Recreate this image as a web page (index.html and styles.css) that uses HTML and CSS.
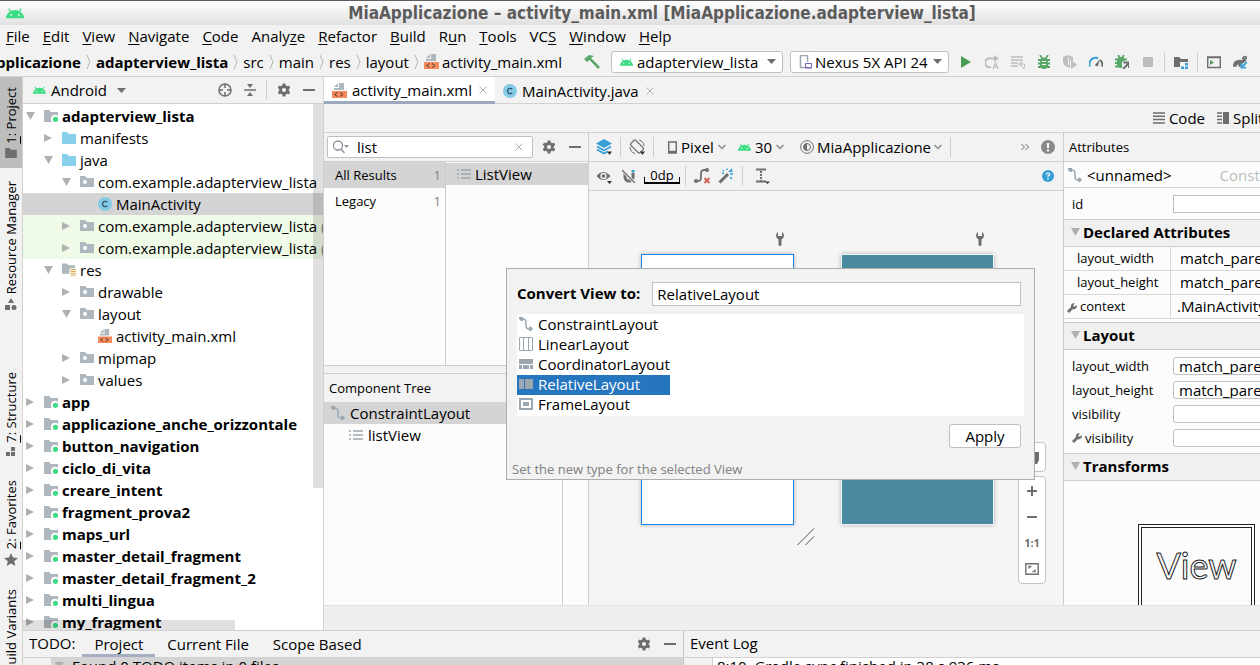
FILE: index.html
```
<!DOCTYPE html>
<html lang="it">
<head>
  <meta charset="utf-8">
  <title>MiaApplicazione – activity_main.xml</title>
  <link rel="stylesheet" href="styles.css">
</head>
<body>
  <!-- Icon definitions -->
  <svg class="defs" width="0" height="0">
    <symbol id="android" viewBox="0 0 14 8"><path fill="#3ddc84" d="M0 8a7 6 0 0 1 3-5L1.800.8l.7-.5L3.900 2.400a7 7 0 0 1 6.200 0L11.500.3l.7.5L11 3a7 6 0 0 1 3 5z"/><circle cx="4" cy="5.500" r=".7" fill="#fff"/><circle cx="10" cy="5.500" r=".7" fill="#fff"/></symbol>
    <symbol id="folder" viewBox="0 0 14 12"><path d="M0 0h5l2 2h7v10H0z" fill="currentColor"/></symbol>
    <symbol id="module" viewBox="0 0 14 12"><path d="M0 0h5l2 2h7v4a4 4 0 0 0-6 6H0z" fill="#adb7bd"/><circle cx="11.500" cy="9.300" r="2.600" fill="#3ddc84"/></symbol>
    <symbol id="package" viewBox="0 0 14 12"><path d="M0 0h5l2 2h7v9H0z" fill="#adb7bd"/><circle cx="5" cy="6" r="2" fill="#fff"/></symbol>
    <symbol id="resfolder" viewBox="0 0 15 14"><path d="M0 0h5l2 2h7v3H8v6H0z" fill="#adb7bd"/><path d="M9 6.500h6M9 8.500h6M9 10.500h6M9 12.500h6" stroke="#d9a343"/></symbol>
    <symbol id="xml" viewBox="0 0 15 15"><path d="M7 0h5v7H2V5h5z" fill="#adb7bd"/><path d="M6 0v4H2z" fill="#adb7bd"/><path d="M0 8h15v7H0z" fill="#f58a5c"/><path d="M5.500 9.500l-3 2 3 2M8 9.500l3 2-3 2" fill="none" stroke="#5b3a2a"/></symbol>
    <symbol id="cls" viewBox="0 0 14 14"><circle cx="7" cy="7" r="7" fill="#84c9e6"/><path d="M9.300 5.200A2.700 2.700 0 1 0 9.300 8.800" fill="none" stroke="#34586b" stroke-width="1.300"/></symbol>
    <symbol id="gear" viewBox="0 0 14 14"><circle cx="7" cy="7" r="3.500" fill="none" stroke="#6e6e6e" stroke-width="2.800"/><path stroke="#6e6e6e" stroke-width="3" d="M7 .5V3M7 11v2.500M1.400 3.800l2 1.100M10.600 9.100l2 1.100M1.400 10.200l2-1.100M10.600 4.900l2-1.100"/></symbol>
    <symbol id="minus" viewBox="0 0 12 12"><path d="M0 6h12" stroke="#6e6e6e" stroke-width="2"/></symbol>
    <symbol id="target" viewBox="0 0 14 14"><circle cx="7" cy="7" r="6" fill="none" stroke="#6e6e6e" stroke-width="1.500"/><path d="M7 1v4M7 9v4M1 7h4M9 7h4" stroke="#6e6e6e" stroke-width="1.500"/></symbol>
    <symbol id="collapse" viewBox="0 0 12 12"><path d="M0 6h12" stroke="#6e6e6e" stroke-width="1.500"/><path d="M3 0h6L6 4zM3 12h6L6 8z" fill="#6e6e6e"/></symbol>
    <symbol id="close" viewBox="0 0 8 8"><path d="M.5.5l7 7M7.500.5l-7 7" stroke="#b0b0b0"/></symbol>
    <symbol id="crumb" viewBox="0 0 5 14"><path d="M1 0l3 7-3 7" fill="none" stroke="#b4b4b4"/></symbol>
    <symbol id="chev" viewBox="0 0 8 6"><path d="M.5 1l3.500 3.500L7.500 1" fill="none" stroke="#8a8a8a" stroke-width="1.500"/></symbol>
    <symbol id="drop" viewBox="0 0 9 5"><path d="M0 0h9L4.500 5z" fill="#6e6e6e"/></symbol>
    <symbol id="down" viewBox="0 0 9 8"><path d="M0 0h9L4.500 8z" fill="currentColor"/></symbol>
    <symbol id="right" viewBox="0 0 9 8"><path d="M0 0l8 4-8 4z" fill="currentColor"/></symbol>
    <symbol id="constraint" viewBox="0 0 14 14"><path d="M2 2h2c3 0 3 2 3 5s0 5 3 5h2" fill="none" stroke="#9aa7b0" stroke-width="1.500"/><path d="M0 0h4v4H2L0 2zM10 10l2-.5 2 2.500-2 2h-2z" fill="#9aa7b0"/></symbol>
    <symbol id="list" viewBox="0 0 14 12"><path d="M0 2h2M4 2h10M0 6h2M4 6h10M0 10h2M4 10h10" stroke="#9aa7b0" stroke-width="1.500"/></symbol>
    <symbol id="wrench" viewBox="0 0 8 14"><path d="M2 0v4h4V0q2 1 2 3.500T5.500 7.500V13q0 1-1.500 1t-1.500-1V7.500Q0 6 0 3.500T2 0z" fill="#6e6e6e"/></symbol>
    <symbol id="tool" viewBox="0 0 10 10"><path d="M0 8l4-4Q3.500 1 6 .3q1-.3 2 0L6.500 2v1.500H8L9.700 2q.6 2-.7 3.300T6 6L2 10z" fill="#6e6e6e"/></symbol>
  </svg>

  <header class="titlebar">
    <svg class="logo"><use href="#android"/></svg>
    <h1>MiaApplicazione – activity_main.xml [MiaApplicazione.adapterview_lista]</h1>
  </header>

  <nav class="menubar">
    <button><u>F</u>ile</button>
    <button><u>E</u>dit</button>
    <button><u>V</u>iew</button>
    <button><u>N</u>avigate</button>
    <button><u>C</u>ode</button>
    <button>Analy<u>z</u>e</button>
    <button><u>R</u>efactor</button>
    <button><u>B</u>uild</button>
    <button>R<u>u</u>n</button>
    <button><u>T</u>ools</button>
    <button>VC<u>S</u></button>
    <button><u>W</u>indow</button>
    <button><u>H</u>elp</button>
  </nav>

  <div class="navbar">
    <div class="crumbs">
      <b>MiaApplicazione</b><svg class="crumb"><use href="#crumb"/></svg>
      <b>adapterview_lista</b><svg class="crumb"><use href="#crumb"/></svg>
      <span>src</span><svg class="crumb"><use href="#crumb"/></svg>
      <span>main</span><svg class="crumb"><use href="#crumb"/></svg>
      <span>res</span><svg class="crumb"><use href="#crumb"/></svg>
      <span>layout</span><svg class="crumb"><use href="#crumb"/></svg>
      <svg class="i15"><use href="#xml"/></svg><span class="file">activity_main.xml</span>
    </div>
    <button class="hammer" aria-label="Build"><svg width="16" height="16" viewBox="0 0 16 16"><path d="M0 5l5-4 5 1-3 2 9 9-2 2-8.500-9L3 8z" fill="#59a869"/></svg></button>
    <div class="combo run-config">
      <svg class="android"><use href="#android"/></svg>
      <select aria-label="Run configuration"><option>adapterview_lista</option></select>
      <svg class="arrow"><use href="#drop"/></svg>
    </div>
    <div class="combo device">
      <svg width="14" height="14" viewBox="0 0 14 14"><path d="M8 12.500H1.500v-12h7V7" fill="none" stroke="#9aa7b0" stroke-width="1.500"/><path d="M6.500 8.500h6v4h-6zM6 14h7" fill="none" stroke="#7b5fb0"/></svg>
      <select aria-label="Device"><option>Nexus 5X API 24</option></select>
      <svg class="arrow"><use href="#drop"/></svg>
    </div>
    <div class="run-tools">
      <button aria-label="Run"><svg viewBox="0 0 14 14"><path d="M2 1l10 6-10 6z" fill="#499c54"/></svg></button>
      <button aria-label="Apply changes"><svg viewBox="0 0 14 14"><path d="M6 12A4.500 4.500 0 1 1 6 3.500h5" fill="none" stroke="#bdbdbd" stroke-width="2"/><path d="M9 0l5 3.500L9 7z" fill="#bdbdbd"/><path d="M8 14l2.500-6 2.500 6M9 12h3" fill="none" stroke="#bdbdbd" stroke-width="1.200"/></svg></button>
      <button aria-label="Apply code changes"><svg viewBox="0 0 14 14"><path d="M0 2h12M0 5h12M0 8h7M0 11h7" stroke="#bdbdbd" stroke-width="1.500"/><path d="M9 9h3a2 2 0 0 1 0 4h-1M11 6.500L8.500 9l2.500 2.500" fill="none" stroke="#bdbdbd" stroke-width="1.200"/></svg></button>
      <button aria-label="Debug"><svg viewBox="0 0 14 14"><path d="M3 0l2 3M11 0L9 3M1 5h12M1 8.500h12M1 12h12" stroke="#59a869" stroke-width="1.800"/><rect x="3" y="2.500" width="8" height="11.500" rx="4" fill="#59a869"/><path d="M5 6.500h4M5 9.500h4" stroke="#fff"/></svg></button>
      <button aria-label="Coverage"><svg viewBox="0 0 14 14"><path d="M0 2l5-2 5 2v4L7 5v8Q0 11 0 6z" fill="#bdbdbd"/><path d="M5.500 2v8" stroke="#f2f2f2"/><path d="M8 5l6 4.500-6 4.500z" fill="#bdbdbd"/></svg></button>
      <button aria-label="Profile"><svg viewBox="0 0 14 14"><path d="M1 11.500A6 6 0 0 1 9 3.500" fill="none" stroke="#389fd6" stroke-width="2"/><path d="M11 5a6 6 0 0 1 2 6.500" fill="none" stroke="#6e6e6e" stroke-width="2"/><path d="M6 10l5-6-2 7q-2 1-3-1z" fill="#6e6e6e"/></svg></button>
      <button aria-label="Attach debugger"><svg viewBox="0 0 14 14"><path d="M3 0l2 3M9 0L7 3M0 4.500h12M0 8h7M0 11.500h7" stroke="#59a869" stroke-width="1.800"/><path d="M2 6q0-4 4-4t4 3L7 7v6Q2 13 2 9z" fill="#59a869"/><path d="M8 14l5-5M8.500 7.500H14V13" fill="none" stroke="#6e6e6e" stroke-width="2"/></svg></button>
      <button aria-label="Stop"><svg viewBox="0 0 14 14"><path d="M2 2h10v10H2z" fill="#bdbdbd"/></svg></button>
      <i class="sep"></i>
      <button aria-label="Project structure"><svg viewBox="0 0 14 14"><path d="M0 2h5l2 2h7v3H6v5H0z" fill="#6e6e6e"/><path d="M11 8h3v2.500h-3zM7 11.500h3V14H7zM11 11.500h3V14h-3z" fill="#389fd6"/></svg></button>
      <i class="sep"></i>
      <button aria-label="Running devices"><svg viewBox="0 0 14 14"><path d="M.7 2h12.600v10.500H.7zM0 2.500h14" fill="none" stroke="#6e6e6e" stroke-width="1.500"/><path d="M3 5l4 2.500L3 10z" fill="#499c54"/></svg></button>
      <button aria-label="Sync project"><svg viewBox="0 0 15 14"><path d="M0 12Q0 6 4 5q4-1 6 0 1-3 3-3l1 2-2 1q2-1 2 1l-4 3-2 3H6v-2H4v2z" fill="#6e6e6e"/><path d="M10 4q1-3 3-3t1 3" fill="none" stroke="#6e6e6e" stroke-width="1.500"/><path d="M15 7l-5 5M9 8v5h5" fill="none" stroke="#389fd6" stroke-width="2"/></svg></button>
    </div>
  </div>

  <div class="workspace">
    <!-- Tool window stripe -->
    <aside class="stripe">
      <button class="active"><span><u>1</u>: Project</span><svg width="12" height="10" color="#6e6e6e"><use href="#folder"/></svg></button>
      <button><span>Resource Manager</span><svg width="12" height="12" viewBox="0 0 12 12"><path d="M6 0l3 5H3zM0 7h5v5H0z" fill="#6e6e6e"/><circle cx="9" cy="9.500" r="2.500" fill="#6e6e6e"/></svg></button>
      <button class="push"><span><u>7</u>: Structure</span><svg width="10" height="10" viewBox="0 0 10 10"><path d="M5 0h4v4H5zM0 5h4v4H0zM5 5h4v4H5z" fill="#6e6e6e"/></svg></button>
      <button><span><u>2</u>: Favorites</span><svg width="14" height="13" viewBox="0 0 14 13"><path d="M7 0l2 4.500 5 .5-3.800 3.200L11.400 13 7 10.500 2.600 13l1.200-4.800L0 5l5-.5z" fill="#6e6e6e"/></svg></button>
      <button><span>Build Variants</span></button>
    </aside>

    <div class="center">
      <div class="upper">
        <!-- Project tree -->
        <section class="project">
          <div class="project-head">
            <svg class="android"><use href="#android"/></svg>
            <button class="view">Android <svg class="arrow"><use href="#drop"/></svg></button>
            <button aria-label="Locate"><svg class="i14"><use href="#target"/></svg></button>
            <button aria-label="Collapse all"><svg class="i12"><use href="#collapse"/></svg></button>
            <i class="sep"></i>
            <button aria-label="Settings"><svg class="i14"><use href="#gear"/></svg></button>
            <button aria-label="Hide"><svg class="i12"><use href="#minus"/></svg></button>
          </div>
          <ul class="tree">
            <li class="l0"><svg class="tw"><use href="#down"/></svg><svg class="ic"><use href="#module"/></svg><b>adapterview_lista</b></li>
            <li class="l1"><svg class="tw"><use href="#right"/></svg><svg class="ic blue"><use href="#folder"/></svg>manifests</li>
            <li class="l1"><svg class="tw"><use href="#down"/></svg><svg class="ic blue"><use href="#folder"/></svg>java</li>
            <li class="l2"><svg class="tw"><use href="#down"/></svg><svg class="ic"><use href="#package"/></svg>com.example.adapterview_lista</li>
            <li class="l3 selected"><svg class="ic tall"><use href="#cls"/></svg>MainActivity</li>
            <li class="l2 test"><svg class="tw"><use href="#right"/></svg><svg class="ic"><use href="#package"/></svg>com.example.adapterview_lista <span class="dim">(androidTest)</span></li>
            <li class="l2 test"><svg class="tw"><use href="#right"/></svg><svg class="ic"><use href="#package"/></svg>com.example.adapterview_lista <span class="dim">(test)</span></li>
            <li class="l1"><svg class="tw"><use href="#down"/></svg><svg class="ic tall"><use href="#resfolder"/></svg>res</li>
            <li class="l2"><svg class="tw"><use href="#right"/></svg><svg class="ic"><use href="#package"/></svg>drawable</li>
            <li class="l2"><svg class="tw"><use href="#down"/></svg><svg class="ic"><use href="#package"/></svg>layout</li>
            <li class="l3"><svg class="ic tall"><use href="#xml"/></svg>activity_main.xml</li>
            <li class="l2"><svg class="tw"><use href="#right"/></svg><svg class="ic"><use href="#package"/></svg>mipmap</li>
            <li class="l2"><svg class="tw"><use href="#right"/></svg><svg class="ic"><use href="#package"/></svg>values</li>
            <li class="l0"><svg class="tw"><use href="#right"/></svg><svg class="ic"><use href="#module"/></svg><b>app</b></li>
            <li class="l0"><svg class="tw"><use href="#right"/></svg><svg class="ic"><use href="#module"/></svg><b>applicazione_anche_orizzontale</b></li>
            <li class="l0"><svg class="tw"><use href="#right"/></svg><svg class="ic"><use href="#module"/></svg><b>button_navigation</b></li>
            <li class="l0"><svg class="tw"><use href="#right"/></svg><svg class="ic"><use href="#module"/></svg><b>ciclo_di_vita</b></li>
            <li class="l0"><svg class="tw"><use href="#right"/></svg><svg class="ic"><use href="#module"/></svg><b>creare_intent</b></li>
            <li class="l0"><svg class="tw"><use href="#right"/></svg><svg class="ic"><use href="#module"/></svg><b>fragment_prova2</b></li>
            <li class="l0"><svg class="tw"><use href="#right"/></svg><svg class="ic"><use href="#module"/></svg><b>maps_url</b></li>
            <li class="l0"><svg class="tw"><use href="#right"/></svg><svg class="ic"><use href="#module"/></svg><b>master_detail_fragment</b></li>
            <li class="l0"><svg class="tw"><use href="#right"/></svg><svg class="ic"><use href="#module"/></svg><b>master_detail_fragment_2</b></li>
            <li class="l0"><svg class="tw"><use href="#right"/></svg><svg class="ic"><use href="#module"/></svg><b>multi_lingua</b></li>
            <li class="l0"><svg class="tw"><use href="#right"/></svg><svg class="ic"><use href="#module"/></svg><b>my_fragment</b></li>
          </ul>
          <i class="scroll-v"></i>
          <i class="scroll-h"></i>
        </section>

        <!-- Editor -->
        <main class="editor">
          <div class="tabs">
            <button class="tab active"><svg class="i15"><use href="#xml"/></svg><span>activity_main.xml</span><svg class="x"><use href="#close"/></svg></button>
            <button class="tab"><svg class="i14"><use href="#cls"/></svg><span>MainActivity.java</span><svg class="x"><use href="#close"/></svg></button>
          </div>
          <div class="modes">
            <button><svg width="12" height="12" viewBox="0 0 12 12"><path d="M0 1h12M0 4.300h12M0 7.600h12M0 11h12" stroke="#6e6e6e" stroke-width="1.500"/></svg>Code</button>
            <button><svg width="12" height="12" viewBox="0 0 12 12"><path d="M0 1h5M0 4.300h5M0 7.600h5M0 11h5" stroke="#6e6e6e" stroke-width="1.500"/><path d="M6 0h6v12H6z" fill="#6e6e6e"/></svg>Split</button>
          </div>
          <div class="designer">
            <section class="palette">
              <div class="palette-head">
                <div class="search">
                  <svg width="16" height="14" viewBox="0 0 16 14"><circle cx="5" cy="5.500" r="4.500" fill="none" stroke="#8c9399" stroke-width="1.300"/><path d="M8 9l3.500 4" stroke="#8c9399" stroke-width="1.300"/><path d="M11 5h5l-2.500 3z" fill="#8c9399"/></svg>
                  <input type="text" value="list" aria-label="Search palette">
                  <svg class="x"><use href="#close"/></svg>
                </div>
                <button aria-label="Palette settings"><svg class="i14"><use href="#gear"/></svg></button>
                <button aria-label="Hide palette"><svg class="i12"><use href="#minus"/></svg></button>
              </div>
              <div class="palette-body">
                <ul class="groups">
                  <li class="selected">All Results<span>1</span></li>
                  <li>Legacy<span>1</span></li>
                </ul>
                <ul class="items">
                  <li><svg class="i14"><use href="#list"/></svg>ListView</li>
                </ul>
              </div>
              <div class="splitter"></div>
              <h2>Component Tree</h2>
              <ul class="components">
                <li class="selected"><svg class="i14"><use href="#constraint"/></svg>ConstraintLayout</li>
                <li class="child"><svg class="i14"><use href="#list"/></svg>listView</li>
              </ul>
            </section>

            <section class="surface">
              <div class="bar">
                <button aria-label="Layers"><svg class="i16" viewBox="0 0 16 16"><path d="M8 0l8 4.500L8 9 0 4.500z" fill="#389fd6"/><path d="M1 7.500l7 4 7-4M1 10.500l7 4 4-2" fill="none" stroke="#389fd6" stroke-width="1.800"/><path d="M11 12.500h5L13.500 16z" fill="#333"/></svg></button>
                <i class="sep"></i>
                <button aria-label="Orientation"><svg class="i16" viewBox="0 0 16 16"><rect x="4.500" y="1" width="7" height="13" rx="1.500" fill="none" stroke="#6e6e6e" stroke-width="1.200" transform="rotate(-45 8 7.500)"/><path d="M10 .8A7 7 0 0 1 15 7M6 14.500A7 7 0 0 1 1 8" fill="none" stroke="#6e6e6e"/><path d="M11 12.500h5L13.500 16z" fill="#333"/></svg></button>
                <i class="sep"></i>
                <button class="pick pixel"><svg width="9" height="13" viewBox="0 0 9 13"><path d="M.7 1h7.600v11H.7zM0 10.500h9" fill="none" stroke="#6e6e6e" stroke-width="1.500"/></svg>Pixel<svg class="chev"><use href="#chev"/></svg></button>
                <button class="pick"><svg class="android"><use href="#android"/></svg>30<svg class="chev"><use href="#chev"/></svg></button>
                <button class="pick theme"><svg class="i14" viewBox="0 0 14 14"><circle cx="7" cy="7" r="6.400" fill="none" stroke="#6e6e6e"/><circle cx="7" cy="7" r="3.500" fill="none" stroke="#6e6e6e"/><path d="M7 3.500v7a3.500 3.500 0 0 1 0-7" fill="#6e6e6e"/></svg>MiaApplicazione<svg class="chev"><use href="#chev"/></svg></button>
                <i class="sep"></i>
                <button class="more" aria-label="More"><svg width="8" height="6" viewBox="0 0 8 6"><path d="M.5 0l3 3-3 3M4.500 0l3 3-3 3" fill="none" stroke="#6e6e6e"/></svg></button>
                <button aria-label="Issues"><svg class="i14" viewBox="0 0 14 14"><circle cx="7" cy="7" r="7" fill="#8a8a8a"/><path d="M7 3v5M7 9.500v2" stroke="#fff" stroke-width="2"/></svg></button>
              </div>
              <div class="bar">
                <button aria-label="View options"><svg class="i16" viewBox="0 0 16 16"><path d="M.5 8Q7 0 14.500 8 7 16 .5 8z" fill="#6e6e6e"/><circle cx="7.500" cy="8" r="3.200" fill="#f2f2f2"/><circle cx="7.500" cy="8" r="1.800" fill="#6e6e6e"/><path d="M11 13h5l-2.500 3z" fill="#333"/></svg></button>
                <button class="magnet" aria-label="Autoconnect"><svg class="i14" viewBox="0 0 14 14"><path d="M3 4v4a4 4 0 0 0 8 0V4" fill="none" stroke="#6e6e6e" stroke-width="3"/><path d="M9.500 1h3v2.500h-3z" fill="#389fd6"/><path d="M0 1l13 13" stroke="#f2f2f2" stroke-width="3"/><path d="M0 1l13 13" stroke="#6e6e6e" stroke-width="1.300"/></svg></button>
                <button class="margin">0dp</button>
                <i class="sep"></i>
                <button aria-label="Clear constraints"><svg class="i16" viewBox="0 0 16 16"><path d="M1 13h3c3 0 3-2 3-5.500S7 2 10 2h3" fill="none" stroke="#6e6e6e" stroke-width="1.800"/><circle cx="2" cy="13" r="2" fill="#6e6e6e"/><circle cx="13" cy="2" r="2" fill="#6e6e6e"/><path d="M10.500 10l5 5M15.500 10l-5 5" stroke="#d0604f" stroke-width="1.800"/></svg></button>
                <button aria-label="Infer constraints"><svg class="i16" viewBox="0 0 16 16"><path d="M1.500 14.500L10 6" stroke="#6e6e6e" stroke-width="3"/><path d="M9 2V.5M6 3L5 2M11 4l3-3M12 6h3M12 9l2 2M6 5l-2 .5M12.500 3.500l2-.5" stroke="#389fd6" stroke-width="1.500"/></svg></button>
                <i class="sep"></i>
                <button class="guides" aria-label="Guidelines"><svg class="i16" viewBox="0 0 16 16"><path d="M2 1.500h10M2 13.500h10" stroke="#6e6e6e" stroke-width="1.800"/><path d="M7 3v10" stroke="#6e6e6e" stroke-width="2" stroke-dasharray="2 1"/><path d="M11 13.500h5L13.500 16z" fill="#333"/></svg></button>
                <button class="more" aria-label="Help"><svg class="i12" viewBox="0 0 12 12"><circle cx="6" cy="6" r="6" fill="#389fd6"/><path d="M4.300 4.500Q4.300 3 6 3t1.700 1.500Q7.700 5.500 6 6v1M6 8v1.500" fill="none" stroke="#fff" stroke-width="1.200"/></svg></button>
              </div>
              <div class="canvas">
                <svg class="pin pin-design"><use href="#wrench"/></svg>
                <svg class="pin pin-blueprint"><use href="#wrench"/></svg>
                <div class="screen design"></div>
                <div class="screen blueprint"></div>
                <svg class="grip" viewBox="0 0 18 18"><path d="M.5 17L17 .5M8.500 17l8.500-8.500" stroke="#555"/></svg>
                <div class="zoom">
                  <div class="pan"><button aria-label="Pan"><svg class="i14" viewBox="0 0 14 14"><path d="M2 3h2V1h2V0h2v1h2v1h4v8l-2 4H5L1 8z" fill="#6e6e6e"/></svg></button></div>
                  <div class="levels">
                    <button aria-label="Zoom in"><svg width="10" height="10" viewBox="0 0 10 10"><path d="M0 5h10M5 0v10" stroke="#6e6e6e" stroke-width="2"/></svg></button>
                    <button aria-label="Zoom out"><svg width="10" height="10" viewBox="0 0 10 10"><path d="M0 5h10" stroke="#6e6e6e" stroke-width="2"/></svg></button>
                    <button class="one">1:1</button>
                    <button aria-label="Fit"><svg width="14" height="12" viewBox="0 0 14 12"><path d="M.8.8h12.400v10.400H.8zM4 5.500V3.500h2.500M10 6.500v2H7.500" fill="none" stroke="#6e6e6e" stroke-width="1.400"/></svg></button>
                  </div>
                </div>
              </div>
            </section>

            <!-- Attributes -->
            <section class="attributes">
              <h2>Attributes</h2>
              <div class="component"><svg class="i14"><use href="#constraint"/></svg>&lt;unnamed&gt;<span>ConstraintLayout</span></div>
              <div class="field id-row"><label for="id">id</label><input id="id" type="text"></div>
              <h3><svg class="tw"><use href="#down"/></svg>Declared Attributes</h3>
              <table>
                <tr><th>layout_width</th><td>match_parent</td></tr>
                <tr><th>layout_height</th><td>match_parent</td></tr>
                <tr><th class="tooled"><svg class="i10"><use href="#tool"/></svg>context</th><td class="tooled">.MainActivity</td></tr>
              </table>
              <h3><svg class="tw"><use href="#down"/></svg>Layout</h3>
              <div class="fields">
                <div class="field"><label for="lw">layout_width</label><input id="lw" type="text" value="match_parent"></div>
                <div class="field"><label for="lh">layout_height</label><input id="lh" type="text" value="match_parent"></div>
                <div class="field"><label for="vis">visibility</label><input id="vis" type="text"></div>
                <div class="field"><label for="tvis"><svg class="i10"><use href="#tool"/></svg>visibility</label><input id="tvis" type="text"></div>
              </div>
              <h3><svg class="tw"><use href="#down"/></svg>Transforms</h3>
              <div class="transform"><div class="view-box">View</div></div>
            </section>
          </div>
          <div class="editor-foot"></div>
        </main>
      </div>

      <!-- Bottom tool windows -->
      <div class="lower">
        <section class="todo">
          <div class="tool-head">
            <span>TODO:</span>
            <button class="active">Project</button>
            <button>Current File</button>
            <button>Scope Based</button>
            <button class="end" aria-label="TODO settings"><svg class="i14"><use href="#gear"/></svg></button>
            <button class="hide" aria-label="Hide TODO"><svg class="i12"><use href="#minus"/></svg></button>
          </div>
          <div class="todo-body"><div class="gutter"></div><p><svg class="tw"><use href="#down"/></svg>Found 0 TODO items in 0 files</p></div>
        </section>
        <section class="log">
          <div class="tool-head"><span>Event Log</span></div>
          <div class="log-body"><div class="gutter"></div><p>8:10&nbsp; Gradle sync finished in 38 s 936 ms</p></div>
        </section>
      </div>
    </div>
  </div>

  <!-- Convert view popup -->
  <form class="popup">
    <div class="popup-top">
      <label for="convert">Convert View to:</label>
      <input id="convert" type="text" value="RelativeLayout">
    </div>
    <ul>
      <li><svg class="i14"><use href="#constraint"/></svg>ConstraintLayout</li>
      <li><svg class="i14" viewBox="0 0 14 14"><path d="M.5.5h13v13H.5zM4.500 0v14M9.500 0v14" fill="none" stroke="#9aa7b0"/></svg>LinearLayout</li>
      <li><svg class="i14" viewBox="0 0 14 14"><path d="M0 2h14v5H0zM0 8h3v4H0zM4 8h6v4H4zM11 8h3v4h-3z" fill="#9aa7b0"/></svg>CoordinatorLayout</li>
      <li class="selected"><svg class="i14" viewBox="0 0 14 14"><path d="M0 2h5v10H0zM6 2h8v10H6z" fill="#9aa7b0"/></svg>RelativeLayout</li>
      <li><svg class="i14" viewBox="0 0 14 14"><path d="M1 2h12v10H1z" fill="none" stroke="#9aa7b0" stroke-width="2"/><path d="M4 5h6v4H4z" fill="#9aa7b0"/></svg>FrameLayout</li>
    </ul>
    <div class="popup-actions"><button type="button">Apply</button></div>
    <p>Set the new type for the selected View</p>
  </form>
</body>
</html>
```
FILE: styles.css
```
* {
  box-sizing: border-box;
}
body {
  margin: 0;
  height: 100vh;
  display: flex;
  flex-direction: column;
  overflow: hidden;
  background: #f2f2f2;
  color: #000;
  font: 15px/22px "Open Sans", sans-serif;
  white-space: nowrap;
}
button, input, select {
  font: inherit;
  color: inherit;
  background: none;
  border: none;
  padding: 0;
  margin: 0;
}
button {
  display: flex;
  align-items: center;
  justify-content: center;
}
ul {
  list-style: none;
  margin: 0;
  padding: 0;
}
h1, h2, h3, p {
  margin: 0;
}
svg {
  flex: none;
  display: block;
}
u {
  text-underline-offset: 2px;
}
.defs {
  position: absolute;
}

/* Icon sizes */
.i10 { width: 10px; height: 10px; }
.i12 { width: 12px; height: 12px; }
.i14 { width: 14px; height: 14px; }
.i15 { width: 15px; height: 15px; }
.i16 { width: 16px; height: 16px; }
.x, .chev { width: 8px; height: 8px; }
.android { width: 13px; height: 8px; }
.arrow { width: 9px; height: 5px; }
.tw { width: 9px; height: 8px; color: #b0b0b0; }
.sep {
  width: 1px;
  height: 20px;
  background: #cdcdcd;
}

/* Title, menu and navigation bars */
.titlebar {
  flex: none;
  height: 25px;
  display: flex;
  align-items: center;
  border-top: 1px solid #5c5c5c;
  background: linear-gradient(#fff, #e0e0e0);
}
.titlebar h1 {
  flex: 1;
  padding-left: 40px;
  text-align: center;
  color: #5c5c5c;
  font: bold 17px/22px "DejaVu Sans Condensed", "DejaVu Sans", sans-serif;
}
.logo {
  width: 18px;
  height: 12px;
  margin-left: 6px;
}
.menubar {
  flex: none;
  height: 22px;
  display: flex;
  gap: 13px;
  padding-left: 6px;
}
.navbar {
  flex: none;
  height: 30px;
  display: flex;
  align-items: center;
  border-bottom: 1px solid #d1d1d1;
}
.crumbs {
  flex: none;
  width: 562px;
  display: flex;
  align-items: center;
  justify-content: flex-end;
  overflow: hidden;
}
.crumb {
  width: 5px;
  height: 14px;
  margin: 0 5px;
}
.file {
  margin-left: 3px;
}
.hammer {
  margin: 0 11px 0 22px;
}
.combo {
  height: 22px;
  display: flex;
  align-items: center;
  gap: 4px;
  margin-right: 7px;
  padding: 0 6px 0 8px;
  border: 1px solid #c0c0c0;
  border-radius: 3px;
  background: #fff;
}
.combo select {
  appearance: none;
  flex: 1;
  min-width: 0;
  height: 20px;
  line-height: 20px;
}
.run-config { width: 172px; }
.device {
  width: 159px;
  gap: 2px;
}
.run-tools {
  display: flex;
  align-items: center;
  gap: 12px;
  margin-left: 3px;
}
.run-tools svg {
  width: 14px;
  height: 14px;
}
.run-tools .sep {
  margin: 0 -3px;
}

/* Workspace */
.workspace {
  flex: 1;
  min-height: 0;
  display: flex;
}
.stripe {
  flex: none;
  width: 23px;
  display: flex;
  flex-direction: column;
  gap: 3px;
  overflow: hidden;
  border-right: 1px solid #d1d1d1;
  font-size: 13px;
  line-height: 18px;
}
.stripe button {
  flex: none;
  flex-direction: column;
  gap: 4px;
  padding: 10px 0;
}
.stripe span {
  writing-mode: vertical-rl;
  transform: rotate(180deg);
}
.stripe .active {
  background: #bdbdbd;
}
.stripe .push {
  margin-top: 39px;
}
.center {
  flex: 1;
  min-width: 0;
  display: flex;
  flex-direction: column;
}
.upper {
  flex: 1;
  min-height: 0;
  display: flex;
}

/* Project tree */
.project {
  position: relative;
  flex: none;
  width: 301px;
  overflow: hidden;
  border-right: 1px solid #d1d1d1;
  background: #fff;
}
.project-head {
  height: 27px;
  display: flex;
  align-items: center;
  gap: 12px;
  padding: 0 8px 0 10px;
  border-bottom: 1px solid #d1d1d1;
  background: #f2f2f2;
}
.project-head .view {
  gap: 10px;
  margin: 0 auto 0 -7px;
}
.project-head .sep {
  margin: 0 -2px;
}
.tree {
  padding-top: 1px;
}
.tree li {
  height: 22px;
  display: flex;
  align-items: center;
  white-space: pre;
}
.tree .tw {
  margin-right: 9px;
}
.tree .ic {
  width: 14px;
  height: 12px;
  margin-right: 4px;
}
.tree .tall {
  height: 14px;
}
.tree .blue {
  color: #87d0ec;
}
.l0 { padding-left: 3px; }
.l1 { padding-left: 21px; }
.l2 { padding-left: 39px; }
.l3 { padding-left: 75px; }
.selected {
  background: #d4d4d4;
}
.test {
  background: #effae7;
}
.dim {
  color: #808080;
}
.scroll-v, .scroll-h {
  position: absolute;
  background: rgba(0, 0, 0, 0.12);
}
.scroll-v {
  top: 27px;
  right: 0;
  width: 10px;
  height: 384px;
}
.scroll-h {
  left: 0;
  bottom: 0;
  width: 212px;
  height: 10px;
}

/* Editor */
.editor {
  flex: 1;
  min-width: 0;
  display: flex;
  flex-direction: column;
}
.tabs {
  flex: none;
  height: 27px;
  display: flex;
  border-bottom: 1px solid #d1d1d1;
}
.tab {
  height: 27px;
  gap: 5px;
  padding: 0 8px;
}
.tab .x {
  margin-left: 2px;
}
.tab.active {
  background: #fff;
  border-bottom: 3px solid #9ca8bd;
  padding-top: 2px;
}
.modes {
  flex: none;
  height: 29px;
  display: flex;
  justify-content: flex-end;
  gap: 12px;
  overflow: hidden;
  border-bottom: 1px solid #d1d1d1;
}
.modes button {
  gap: 4px;
}
.modes button:last-child {
  width: 43px;
  justify-content: flex-start;
}
.designer {
  flex: 1;
  min-height: 0;
  display: flex;
}
.editor-foot {
  flex: none;
  height: 25px;
  border-top: 1px solid #e0e0e0;
  background: #efefef;
}
h2 {
  font-size: 13px;
  font-weight: normal;
}

/* Palette */
.palette {
  flex: none;
  width: 265px;
  display: flex;
  flex-direction: column;
  border-right: 1px solid #cdcdcd;
  background: #fcfcfc;
}
.palette-head {
  flex: none;
  height: 29px;
  display: flex;
  align-items: center;
  gap: 13px;
  padding: 0 7px 0 3px;
  border-bottom: 1px solid #d1d1d1;
  background: #f2f2f2;
}
.search {
  flex: 1;
  min-width: 0;
  height: 22px;
  display: flex;
  align-items: center;
  gap: 8px;
  margin-right: -4px;
  padding: 0 9px 0 5px;
  border: 1px solid #c0c0c0;
  border-radius: 2px;
  background: #fff;
}
.search input {
  flex: 1;
  min-width: 0;
}
.palette-body {
  flex: none;
  height: 203px;
  display: flex;
}
.groups {
  width: 122px;
  border-right: 1px solid #cdcdcd;
  font-size: 13px;
}
.groups li {
  height: 26px;
  display: flex;
  align-items: center;
  justify-content: space-between;
  padding: 0 4px 0 11px;
}
.groups span {
  color: #808080;
}
.items {
  flex: 1;
  padding-top: 1px;
}
.items li {
  height: 22px;
  display: flex;
  align-items: center;
  gap: 4px;
  padding-left: 11px;
  background: #d4d4d4;
}
.splitter {
  flex: none;
  height: 9px;
  border: 1px solid #cdcdcd;
  border-width: 1px 0;
  background: #f2f2f2;
}
.palette h2 {
  flex: none;
  height: 28px;
  padding: 3px 5px;
  background: #f2f2f2;
}
.components {
  flex: 1;
  width: 239px;
  border-right: 1px solid #cdcdcd;
}
.components li {
  height: 22px;
  display: flex;
  align-items: center;
  gap: 5px;
  padding-left: 7px;
}
.components .child {
  padding-left: 25px;
}

/* Design surface */
.surface {
  flex: 1;
  min-width: 0;
  display: flex;
  flex-direction: column;
  background: #f5f5f5;
}
.bar {
  flex: none;
  height: 29px;
  display: flex;
  align-items: center;
  gap: 8px;
  padding: 0 8px 0 7px;
  border-bottom: 1px solid #d1d1d1;
  background: #f2f2f2;
}
.pick {
  gap: 4px;
}
.pixel {
  margin-left: 6px;
}
.theme {
  gap: 3px;
  margin-left: 8px;
}
.pick + .pick:not(.theme) {
  margin-left: 4px;
}
.bar .more {
  margin-left: auto;
  margin-right: 4px;
}
.bar .i12 {
  margin-right: -3px;
}
.magnet {
  margin-left: 2px;
}
.margin {
  width: 36px;
  height: 16px;
  margin-right: -3px;
  border-width: 0 1px 2px;
  border-style: solid;
  border-image: linear-gradient(transparent 60%, #000 60%) 2;
  font-size: 13px;
  line-height: 14px;
}
.guides {
  margin-left: 3px;
}
.canvas {
  position: relative;
  flex: 1;
  overflow: hidden;
}
.pin, .screen, .grip, .zoom {
  position: absolute;
}
.pin {
  top: 41px;
  width: 8px;
  height: 14px;
}
.pin-design { left: 187px; }
.pin-blueprint { left: 387px; }
.screen {
  top: 63px;
  width: 153px;
  height: 271px;
  box-shadow: 0 0 4px rgba(0, 0, 0, 0.3);
}
.design {
  left: 52px;
  border: 1px solid #1a86f2;
  background: #fff;
}
.blueprint {
  left: 252px;
  border: 1px solid #eaf6f8;
  background: #498a9e;
}
.grip {
  left: 208px;
  top: 337px;
  width: 18px;
  height: 18px;
}
.zoom {
  right: 17px;
  bottom: 21px;
  width: 28px;
}
.pan, .levels {
  padding: 1px 0;
  border: 1px solid #c4c4c4;
  border-radius: 4px;
  background: #fff;
}
.pan {
  margin-bottom: 4px;
}
.zoom button {
  width: 26px;
  height: 26px;
}
.one {
  color: #6e6e6e;
  font-size: 11px;
  font-weight: bold;
}

/* Attributes */
.attributes {
  flex: none;
  width: 197px;
  overflow: hidden;
  border-left: 1px solid #cdcdcd;
  background: #fcfcfc;
}
.attributes h2 {
  height: 29px;
  padding: 3px 5px;
  border-bottom: 1px solid #d1d1d1;
  background: #f2f2f2;
}
.component {
  height: 26px;
  display: flex;
  align-items: center;
  gap: 5px;
  padding-left: 4px;
  border-bottom: 1px solid #d9d9d9;
}
.component span {
  margin-left: 43px;
  color: #b8bfb8;
}
.field {
  width: 240px;
  height: 24px;
  display: flex;
  align-items: center;
  font-size: 13px;
}
.field label {
  flex: none;
  width: 109px;
  display: flex;
  align-items: center;
  gap: 3px;
  padding-left: 8px;
}
.field input {
  flex: 1;
  height: 18px;
  padding: 0 5px;
  border: 1px solid #c0c0c0;
  border-radius: 3px;
  background: #fff;
  font-size: 15px;
}
.id-row {
  height: 31px;
}
.id-row input {
  border-radius: 0;
}
.attributes h3 {
  height: 28px;
  display: flex;
  align-items: center;
  gap: 3px;
  padding: 0 0 2px 7px;
  border: 1px solid #cdcdcd;
  border-width: 1px 0;
  background: #f0f0f0;
  font-size: 15px;
}
.attributes table {
  width: 240px;
  margin-bottom: 3px;
  border-spacing: 0;
  table-layout: fixed;
}
.attributes th, .attributes td {
  height: 24px;
  padding: 0 9px;
  border-bottom: 1px solid #d9d9d9;
  line-height: 23px;
}
.attributes th {
  width: 107px;
  padding-left: 13px;
  border-right: 1px solid #d9d9d9;
  font-size: 13px;
  font-weight: normal;
  text-align: left;
}
.attributes th.tooled {
  padding-left: 3px;
}
.attributes td.tooled {
  padding-left: 6px;
}
.tooled svg {
  display: inline-block;
  margin-right: 3px;
  vertical-align: middle;
}
.fields {
  padding: 4px 0 3px;
}
.transform {
  padding: 43px 0 0 74px;
}
.view-box {
  width: 117px;
  height: 117px;
  border: 4px double #222;
  color: transparent;
  font-family: Lato, sans-serif;
  font-size: 36px;
  line-height: 74px;
  text-align: center;
  -webkit-text-stroke: 1px #222;
}

/* Bottom tool windows */
.lower {
  flex: none;
  height: 35px;
  display: flex;
  overflow: hidden;
  border-top: 1px solid #d1d1d1;
}
.todo {
  flex: none;
  width: 661px;
  border-right: 1px solid #c8c8c8;
}
.log {
  flex: 1;
}
.tool-head {
  height: 27px;
  display: flex;
  padding: 0 7px 0 6px;
  border-bottom: 1px solid #d1d1d1;
  line-height: 25px;
}
.tool-head button {
  padding: 0 12px;
}
.tool-head span {
  margin-right: 7px;
}
.tool-head .active {
  border-bottom: 3px solid #a6b0c2;
  padding-top: 3px;
}
.tool-head .end {
  margin-left: auto;
  padding: 0;
}
.tool-head .hide {
  margin-left: 13px;
  padding: 0;
}
.todo-body, .log-body {
  display: flex;
  line-height: 16px;
}
.gutter {
  width: 28px;
}
.todo-body p {
  flex: 1;
  display: flex;
  align-items: center;
  gap: 8px;
  padding-left: 4px;
  background: #d4d4d4;
}
.log-body p {
  flex: 1;
  padding: 0 4px;
  border-left: 1px solid #d1d1d1;
  background: #fff;
}

/* Convert view popup */
.popup {
  position: absolute;
  left: 506px;
  top: 268px;
  width: 529px;
  padding: 13px 10px 0;
  border: 1px solid #adadad;
  background: #f2f2f2;
}
.popup-top {
  display: flex;
  align-items: center;
  gap: 12px;
  padding-right: 3px;
}
.popup label {
  padding-bottom: 2px;
  font-weight: bold;
}
.popup input {
  flex: 1;
  min-width: 0;
  height: 24px;
  padding: 0 4px;
  border: 1px solid #c0c0c0;
  background: #fff;
}
.popup ul {
  margin-top: 8px;
  padding: 1px 0;
  background: #fff;
}
.popup li {
  width: 153px;
  height: 20px;
  display: flex;
  align-items: center;
  gap: 5px;
  padding: 0 0 2px 2px;
  line-height: 18px;
}
.popup .selected {
  background: #2675bf;
  color: #fff;
}
.popup-actions {
  display: flex;
  justify-content: flex-end;
  padding: 8px 3px 0 0;
}
.popup-actions button {
  width: 72px;
  height: 24px;
  border: 1px solid #c0c0c0;
  border-radius: 3px;
  background: #fff;
}
.popup p {
  margin: 12px 0 0 -5px;
  padding-bottom: 1px;
  color: #808080;
  font-size: 13px;
  line-height: 18px;
}
```
